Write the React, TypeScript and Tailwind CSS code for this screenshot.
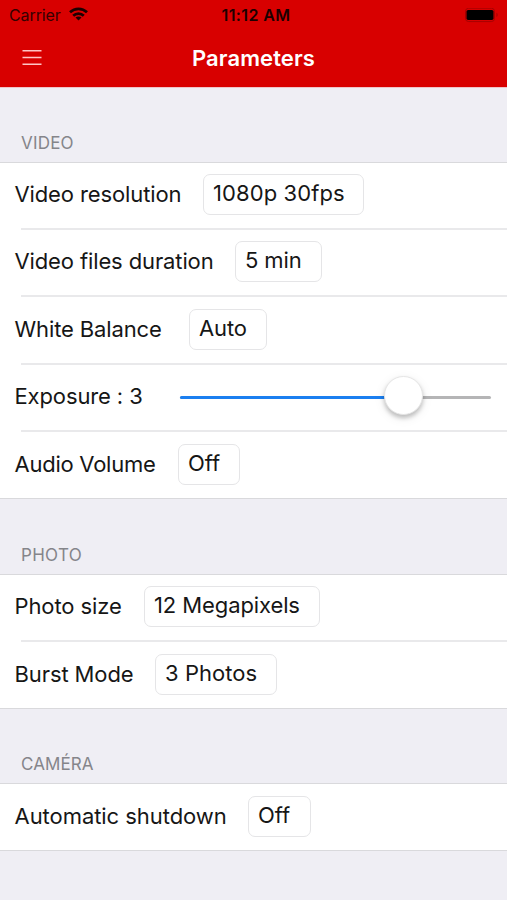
import React from "react";

type Row = {
  label: string;
  labelClass: string;
  height: string;
  value?: string;
  boxClass?: string;
  last?: boolean;
};

const video: Row[] = [
  { label: "Video resolution", labelClass: "w-[188px] tracking-[-0.12px]", height: "h-[67px]", value: "1080p 30fps", boxClass: "w-[161px] tracking-[0.1px]" },
  { label: "Video files duration", labelClass: "w-[220px] tracking-[-0.12px]", height: "h-[67px]", value: "5 min", boxClass: "w-[87px]" },
  { label: "White Balance", labelClass: "w-[174px] tracking-[-0.12px]", height: "h-[68px]", value: "Auto", boxClass: "w-[78px]" },
  { label: "Exposure : 3", labelClass: "w-[165px] tracking-[-0.12px]", height: "h-[67px]" },
  { label: "Audio Volume", labelClass: "w-[163px] tracking-[-0.25px]", height: "h-[67px]", value: "Off", boxClass: "w-[62px]", last: true },
];

const photo: Row[] = [
  { label: "Photo size", labelClass: "w-[129px]", height: "h-[67px]", value: "12 Megapixels", boxClass: "w-[176px]" },
  { label: "Burst Mode", labelClass: "w-[140px]", height: "h-[67px]", value: "3 Photos", boxClass: "w-[122px] tracking-[0.05px]", last: true },
];

const camera: Row[] = [
  { label: "Automatic shutdown", labelClass: "w-[233px] tracking-[-0.05px]", height: "h-[67px]", value: "Off", boxClass: "w-[63px]", last: true },
];

function Slider() {
  return (
    <div className="relative mt-[2px] h-[3px] w-[311px] rounded-full bg-[#b5b5b6]">
      <div className="h-full w-[223px] rounded-full bg-[#1b7ff0]" />
      <div className="absolute -top-[20px] left-[204px] size-[39px] rounded-full border border-[#e6e6e6] bg-white shadow-[0_3px_4px_rgba(0,0,0,0.22),0_3px_12px_rgba(0,0,0,0.08)]" />
    </div>
  );
}

function SettingRow({ row }: { row: Row }) {
  return (
    <div className={`flex flex-col ${row.height}`}>
      <div className="flex min-h-0 flex-1 items-center pb-[2px] pl-[14.5px]">
        <span className={`shrink-0 whitespace-nowrap ${row.labelClass}`}>{row.label}</span>
        {row.value ? (
          <div className={`ml-[0.5px] flex h-[41px] shrink-0 rounded-[7px] border-[1.5px] border-[#e5e5e7] pl-[9px] leading-[37px] whitespace-nowrap ${row.boxClass}`}>
            {row.value}
          </div>
        ) : (
          <Slider />
        )}
      </div>
      <div className={row.last ? "h-px bg-[#d9d9dc]" : "ml-[21px] h-[2px] bg-[#e9e9eb]"} />
    </div>
  );
}

function Section({ title, headerClass, rows }: { title: string; headerClass: string; rows: Row[] }) {
  return (
    <section>
      <h2 className={`flex items-end border-b border-[#d9d9dc] pb-[8px] pl-[21px] text-[17px] leading-[22px] text-[#85858a] ${headerClass}`}>
        {title}
      </h2>
      <div className="bg-white">
        {rows.map((row) => (
          <SettingRow key={row.label} row={row} />
        ))}
      </div>
    </section>
  );
}

export default function App() {
  return (
    <div className="h-[900px] w-[507px] overflow-hidden bg-[#efeef4] font-['Inter',sans-serif] text-[22px] tracking-[-0.1px] text-[#161616]">
      <header className="h-[88px] border-b border-[#f0c4c8] bg-[#d80000]">
        <div className="grid h-[30px] grid-cols-3 items-center px-[8px] text-[16px] leading-[30px] text-[#350000]">
          <div className="flex items-center gap-[8px] pl-px">
            <span>Carrier</span>
            <svg className="mt-[-2px] h-[14px] w-[19px]" viewBox="0 0 19 14" fill="none" stroke="#1c0000" strokeWidth="2.7">
              <path d="M1 5.3C5.8.6 13.2.6 18 5.3" />
              <path d="M4.2 8.7c3-2.9 7.6-2.9 10.6 0" />
              <path d="M9.5 13.6 6.5 10.6c1.7-1.6 4.3-1.6 6 0z" fill="#1c0000" stroke="none" />
            </svg>
          </div>
          <span className="pl-[5px] text-center font-semibold tracking-[0.4px] whitespace-nowrap text-[#1c0000]">11:12 AM</span>
          <svg className="h-[15px] w-[34px] justify-self-end" viewBox="0 0 34 15" fill="none">
            <rect x="0.5" y="0.2" width="29" height="13.4" rx="3.2" stroke="#a60000" />
            <rect x="1.5" y="1.9" width="27" height="10" rx="1.6" fill="#000" />
            <path d="M31.5 4.7c1.5.6 1.5 3.8 0 4.4z" fill="#a00000" />
          </svg>
        </div>
        <div className="flex h-[56px] items-center pl-[22px] text-white">
          <svg className="h-[18px] w-[20px]" viewBox="0 0 20 18" stroke="#ffc5c5" strokeWidth="1.6">
            <path d="M.5 1.7h19M.5 8.5h19M.5 15.2h19" />
          </svg>
          <h1 className="ml-[150px] font-semibold tracking-[0.1px]">Parameters</h1>
        </div>
      </header>
      <Section title="VIDEO" headerClass="h-[75px] tracking-[0.2px]" rows={video} />
      <Section title="PHOTO" headerClass="h-[76px] tracking-[0.3px]" rows={photo} />
      <Section title="CAMÉRA" headerClass="h-[75px] tracking-[0.1px]" rows={camera} />
    </div>
  );
}
